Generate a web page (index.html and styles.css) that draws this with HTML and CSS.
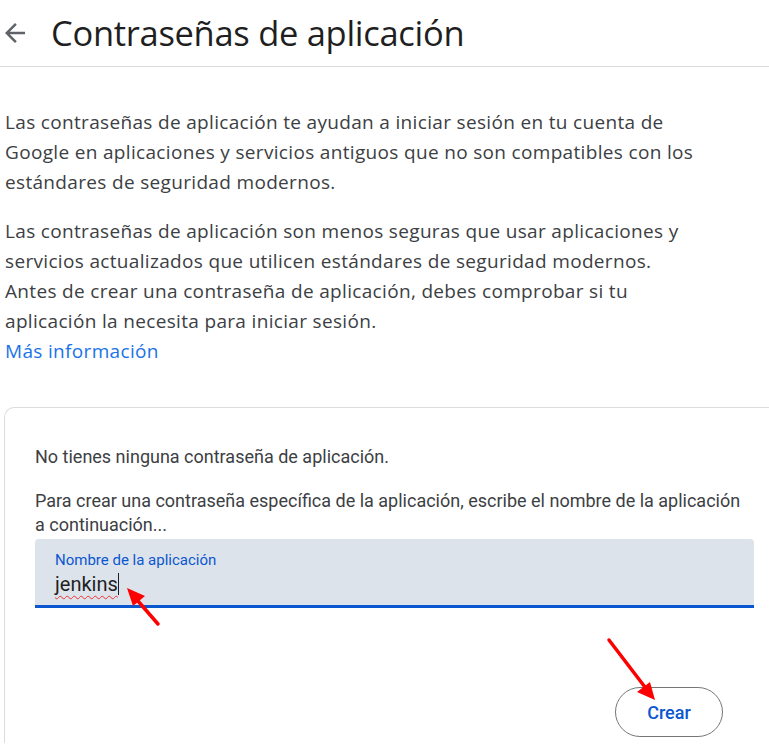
FILE: index.html
```html
<!DOCTYPE html>
<html lang="es">
<head>
<meta charset="utf-8">
<title>Contraseñas de aplicación</title>
<link rel="stylesheet" href="styles.css">
</head>
<body>
<header class="topbar">
  <span class="back" aria-label="Atrás">
    <svg width="30" height="30" viewBox="0 0 24 24"><path d="M20 11H7.83l5.59-5.59L12 4l-8 8 8 8 1.41-1.41L7.83 13H20v-2z" fill="#5f6368"/></svg>
  </span>
  <h1 class="title">Contraseñas de aplicación</h1>
</header>
<main class="content">
  <p class="intro">Las contraseñas de aplicación te ayudan a iniciar sesión en tu cuenta de Google en aplicaciones y servicios antiguos que no son compatibles con los estándares de seguridad modernos.</p>
  <p class="intro">Las contraseñas de aplicación son menos seguras que usar aplicaciones y servicios actualizados que utilicen estándares de seguridad modernos. Antes de crear una contraseña de aplicación, debes comprobar si tu aplicación la necesita para iniciar sesión.<br><a class="link" href="#">Más información</a></p>
  <section class="card">
    <p class="msg">No tienes ninguna contraseña de aplicación.</p>
    <p class="msg msg-two">Para crear una contraseña específica de la aplicación, escribe el nombre de la aplicación a continuación...</p>
    <div class="field">
      <span class="label">Nombre de la aplicación</span>
      <span class="value"><span class="typed">jenkins</span><span class="caret"></span></span>
    </div>
    <div class="actions">
      <button class="btn">Crear</button>
    </div>
  </section>
</main>
<svg class="arrows" width="769" height="744" viewBox="0 0 769 744">
  <g stroke="#f00" stroke-width="3.5" stroke-linecap="round" fill="none">
    <line x1="158" y1="624" x2="131" y2="593"/>
    <line x1="609" y1="640" x2="651" y2="695"/>
  </g>
  <g fill="#f00">
    <polygon points="127,588 145,596 133,606"/>
    <polygon points="655,700 637,692 650,682"/>
  </g>
</svg>
</body>
</html>
```
FILE: styles.css
```css
html, body {
  margin: 0;
  padding: 0;
  background: #ffffff;
  width: 769px;
  height: 744px;
  overflow: hidden;
}
body {
  font-family: Roboto, "Noto Sans", sans-serif;
  color: #1f1f1f;
  position: relative;
}
.topbar {
  display: flex;
  align-items: center;
  height: 66px;
  border-bottom: 1px solid #dadce0;
}
.back {
  display: flex;
  width: 30px;
  height: 30px;
  margin-left: 0;
}
.title {
  margin: 0 0 0 21px;
  font-family: "Open Sans", Roboto, sans-serif;
  font-weight: 400;
  font-size: 34.5px;
  letter-spacing: -0.3px;
  color: #1f1f1f;
  line-height: 40px;
}
.content {
  padding: 40px 0 0 5px;
}
.intro {
  max-width: 700px;
  margin: 0 0 19px 0;
  font-family: "Open Sans", Roboto, sans-serif;
  font-size: 19px;
  line-height: 30px;
  color: #3c4043;
  letter-spacing: 0.33px;
}
.link {
  color: #1a73e8;
  text-decoration: none;
}
.card {
  box-sizing: border-box;
  height: 336px;
  margin-top: 41px;
  margin-left: -1px;
  border: 1px solid #dadce0;
  border-right: none;
  border-bottom: none;
  border-radius: 10px 0 0 0;
  padding: 37px 15px 0 30px;
}
.msg {
  margin: 0;
  font-size: 18px;
  line-height: 24px;
  color: #3c4043;
}
.msg-two {
  margin-top: 20px;
}
.field {
  margin-top: 2px;
  height: 66px;
  background: #dde3ea;
  border-radius: 4px 4px 0 0;
  border-bottom: 3px solid #0b57d0;
  padding: 0 20px;
  display: flex;
  flex-direction: column;
}
.label {
  margin-top: 12px;
  font-size: 15px;
  line-height: 18px;
  color: #0b57d0;
}
.value {
  display: flex;
  align-items: center;
  margin-top: 3px;
  font-size: 20px;
  line-height: 24px;
  color: #1f1f1f;
}
.typed {
  text-decoration: underline wavy #e33;
  text-decoration-thickness: 1px;
  text-underline-offset: 4px;
}
.caret {
  width: 1px;
  height: 22px;
  background: #1f1f1f;
}
.actions {
  display: flex;
  justify-content: flex-end;
  padding-right: 31px;
  margin-top: 79px;
}
.btn {
  width: 108px;
  height: 50px;
  border-radius: 25px;
  border: 1px solid #747775;
  background: #fff;
  color: #0b57d0;
  font-family: Roboto, sans-serif;
  font-size: 18px;
  font-weight: 500;
}
.arrows {
  position: absolute;
  left: 0;
  top: 0;
  pointer-events: none;
}
```
